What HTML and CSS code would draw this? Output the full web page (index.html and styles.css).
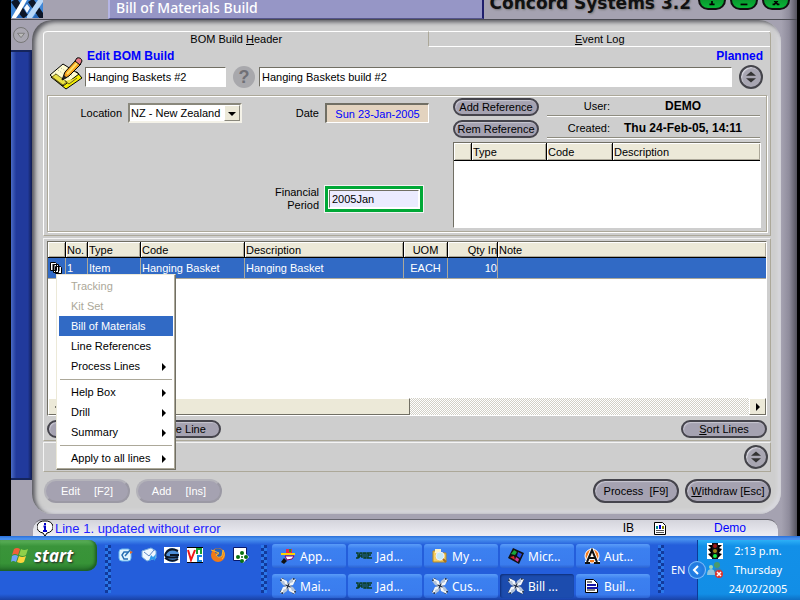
FILE: index.html
```html
<!DOCTYPE html>
<html lang="en">
<head>
    <meta charset="UTF-8">
    <meta name="viewport" content="width=device-width, initial-scale=1.0">
    <title>Bill of Materials Build</title>
    <link rel="stylesheet" href="styles.css">
</head>
<body>
    <!-- shared icons -->
    <svg class="sprite" aria-hidden="true">
        <symbol id="star" viewBox="0 0 16 16">
            <path d="M1 1l14 14M15 1L1 15" stroke="#2c3a52" stroke-width="4"/>
            <path d="M1 0l6 3 1 4-5-1zM16 1l-3 6-4 1 1-5zM15 16l-6-3-1-4 5 1zM0 15l3-6 4-1-1 5z" fill="#f2f7fc"/>
            <path d="M0 3l3 4 3 1-2-5zM13 0L9 3 8 6l5-2zM16 13l-3-4-3-1 2 5zM3 16l4-3 1-3-5 2z" fill="#b4c4da"/>
        </symbol>
        <symbol id="jade" viewBox="0 0 16 16">
            <path d="M0 10h2V5H0M3 10l1-5h2v5M4 8h2M8 5v5h2V5H7M12 5v5M11 5h5M12 7h3M11 10h5" fill="none" stroke="#0a3d22" stroke-width="1.4"/>
        </symbol>
        <symbol id="updown" viewBox="0 0 24 24">
            <path d="M6 10.500l6-5 6 5zM6 13.500l6 5 6-5z" fill="#333"/>
        </symbol>
    </svg>

    <div class="window">
        <header class="titlebar">
            <svg class="logo" viewBox="0 0 32 18">
                <path d="M0 0h32v18H0z" fill="#3f86d6"/>
                <path d="M0 2l3-2h4l10 15-4 3h-2zM17 2l3-2h3l9 13v5h-4z" fill="#0c1628"/>
                <path d="M1 17L11 0h5L6 18H1z" fill="#fff"/>
                <path d="M16 16L27 0h5v2L21 18h-5z" fill="#b9d8f8"/>
                <path d="M5 18l3-4 4 4zM22 18l3-4 3 4zM12 8l4-6 4 6-4 6z" fill="#2868b8"/>
                <path d="M13 8l3-4 3 4-3 5z" fill="#f4f9ff"/>
            </svg>
            <h1 class="title">Bill of Materials Build</h1>
            <div class="brand">Concord Systems 3.2</div>
            <div class="window-buttons">
                <button type="button" aria-label="Info"><svg viewBox="0 0 28 12"><path d="M11 4h6M14 0v4" stroke="#000" stroke-width="2"/></svg></button>
                <button type="button" aria-label="Minimize"><svg viewBox="0 0 28 12"><path d="M10 4h8" stroke="#000" stroke-width="2"/></svg></button>
                <button type="button" aria-label="Close"><svg viewBox="0 0 28 12"><path d="M12 0l4 4M16 0l-4 4M10 4h3M15 4h3" stroke="#000" stroke-width="2"/></svg></button>
            </div>
        </header>

        <div class="frame">
            <div class="rail">
                <button type="button" class="rail-button" aria-label="Toggle menu"><svg viewBox="0 0 16 16"><path d="M4 6h8l-4 5z" fill="#bbb" stroke="#777"/></svg></button>
                <div class="rail-bar"></div>
            </div>

            <main class="center">
                <div class="panel">
                    <section class="header-pane">
                        <nav class="tabs">
                            <button type="button" class="tab active">BOM Build <u>H</u>eader</button>
                            <button type="button" class="tab"><u>E</u>vent Log</button>
                        </nav>
                        <div class="header-form">
                            <svg class="note-icon" viewBox="0 0 34 34">
                                <path d="M2 20l15 12 16-11-5-6z" fill="#f4ee00" stroke="#000"/>
                                <path d="M1 18L14 7l16 10-16 12z" fill="#fffccf" stroke="#000"/>
                                <path d="M3 20l4-3 11 8-4 3zM16 24l4 3 8-6" fill="#e9e044" stroke="#6c6414"/>
                                <path d="M9 13l12 9M12 11l12 8M6 16l11 9" stroke="#9a9" stroke-dasharray="1 2"/>
                                <path d="M13 23l3-8 11-12 5 4-12 12z" fill="#f6a21c" stroke="#000"/>
                                <path d="M18 17l11-12" stroke="#ffe06a" stroke-width="2"/>
                                <path d="M26 4l2-3q4-1 5 3l-2 4z" fill="#e87c86" stroke="#000"/>
                                <path d="M13 23l2-5 3 3z" fill="#222"/>
                            </svg>
                            <div class="header-fields">
                                <div class="header-labels">
                                    <label for="code">Edit BOM Build</label>
                                    <span>Planned</span>
                                </div>
                                <div class="header-inputs">
                                    <input type="text" id="code" class="field code-field" value="Hanging Baskets #2">
                                    <button type="button" class="help">?</button>
                                    <input type="text" class="field name-field" value="Hanging Baskets build #2" aria-label="Build name">
                                    <button type="button" class="round" aria-label="Previous or next"><svg><use href="#updown"/></svg></button>
                                </div>
                            </div>
                        </div>

                        <div class="group">
                            <form class="details">
                                <label for="location">Location</label>
                                <div class="select-box">
                                    <select id="location"><option>NZ - New Zealand</option></select>
                                    <span class="select-arrow"></span>
                                </div>
                                <label for="date">Date</label>
                                <input type="text" id="date" class="field date-field" value="Sun 23-Jan-2005">
                                <label for="period" class="period-label">Financial<br>Period</label>
                                <div class="period-box"><input type="text" id="period" class="field" value="2005Jan"></div>
                            </form>
                            <div class="references">
                                <div class="reference-top">
                                    <div class="reference-buttons">
                                        <button type="button" class="pill">Add Reference</button>
                                        <button type="button" class="pill">Rem Reference</button>
                                    </div>
                                    <dl class="audit">
                                        <div><dt>User:</dt><dd>DEMO</dd></div>
                                        <div><dt>Created:</dt><dd>Thu 24-Feb-05, 14:11</dd></div>
                                    </dl>
                                </div>
                                <div class="list reference-list">
                                    <table>
                                        <colgroup><col class="w-17"><col class="w-75"><col class="w-66"><col></colgroup>
                                        <thead><tr><th></th><th>Type</th><th>Code</th><th>Description</th></tr></thead>
                                    </table>
                                </div>
                            </div>
                        </div>
                    </section>

                    <section class="lines-pane">
                        <div class="list lines-list">
                            <table>
                                <colgroup><col class="w-17"><col class="w-22"><col class="w-53"><col class="w-104"><col class="w-159"><col class="w-44"><col class="w-50"><col></colgroup>
                                <thead>
                                    <tr><th></th><th>No.</th><th>Type</th><th>Code</th><th>Description</th><th class="mid">UOM</th><th class="num">Qty In</th><th>Note</th></tr>
                                </thead>
                                <tbody>
                                    <tr class="selected">
                                        <td><svg class="row-icon" viewBox="0 0 14 14"><path d="M6.500 5.500h5l1 1v6h-6zM4.500 3.500h5v8h-5zM1.500 1.500h5l1 1v7h-6z" fill="#fff" stroke="#000"/><path d="M3 4h3M3 6h3M3 8h3M9 7h2M9 9h2" stroke="#000"/></svg></td>
                                        <td>1</td><td>Item</td><td>Hanging Basket</td><td>Hanging Basket</td><td class="mid">EACH</td><td class="num">10</td><td></td>
                                    </tr>
                                </tbody>
                            </table>
                            <div class="scrollbar">
                                <button type="button" class="scroll-button left" aria-label="Scroll left"></button>
                                <div class="thumb"></div>
                                <button type="button" class="scroll-button right" aria-label="Scroll right"></button>
                            </div>
                        </div>
                        <div class="line-buttons">
                            <button type="button" class="pill" aria-label="Insert"></button>
                            <button type="button" class="pill">Delete Line</button>
                            <button type="button" class="pill push"><u>S</u>ort Lines</button>
                        </div>

                        <ul class="menu">
                            <li><button type="button" disabled>Tracking</button></li>
                            <li><button type="button" disabled>Kit Set</button></li>
                            <li><button type="button" class="current">Bill of Materials</button></li>
                            <li><button type="button">Line References</button></li>
                            <li><button type="button" class="sub">Process Lines</button></li>
                            <li class="separator"></li>
                            <li><button type="button" class="sub">Help Box</button></li>
                            <li><button type="button" class="sub">Drill</button></li>
                            <li><button type="button" class="sub">Summary</button></li>
                            <li class="separator"></li>
                            <li><button type="button" class="sub">Apply to all lines</button></li>
                        </ul>
                    </section>

                    <section class="footer-pane">
                        <button type="button" class="round" aria-label="Previous or next line"><svg><use href="#updown"/></svg></button>
                    </section>

                    <div class="actions">
                        <button type="button" class="pill big" disabled><span>Edit</span><span>[F2]</span></button>
                        <button type="button" class="pill big" disabled><span>Add</span><span>[Ins]</span></button>
                        <button type="button" class="pill big push">Process&nbsp; [F9]</button>
                        <button type="button" class="pill big"><span><u>W</u>ithdraw [Esc]</span></button>
                    </div>
                </div>

                <div class="status">
                    <svg class="info" viewBox="0 0 16 17"><path d="M8 1a7 6 0 0 1 2 12l-2 3-2-3a7 6 0 0 1 2-12z" fill="#fff" stroke="#000"/><path d="M8 3v2M6.500 6.500H8V11M6 11h4" stroke="#0000c8" stroke-width="2" fill="none"/></svg>
                    <span class="status-text">Line 1. updated without error</span>
                    <span class="status-code">IB</span>
                    <svg class="report" viewBox="0 0 12 13"><path d="M.5.5h8l3 3v9H.5z" fill="#fff" stroke="#000"/><path d="M3 7V4" stroke="#088" stroke-width="2"/><path d="M6 7V3" stroke="#00c" stroke-width="2"/><path d="M9 7V4" stroke="#880" stroke-width="2"/><path d="M2 8.500h8M2 10.500h8" stroke="#555"/></svg>
                    <span class="status-user">Demo</span>
                </div>
            </main>
        </div>
    </div>

    <footer class="taskbar">
        <button type="button" class="start">
            <svg viewBox="0 0 18 17"><path d="M3 2q3-2 6 0L7 8Q4 6 1 8z" fill="#f0603a"/><path d="M10 2q3 2 7 0l-2 6q-3 2-7 0z" fill="#8fd04a"/><path d="M1 9q3-2 6 0l-2 6q-3-2-5 0z" fill="#6ea4f8"/><path d="M8 9q3 2 7 0l-2 6q-3 2-7 0z" fill="#fbd43c"/></svg>
            start
        </button>
        <div class="grip"></div>
        <div class="quick">
            <svg viewBox="0 0 16 16"><rect x="1" y="2" width="12" height="12" rx="3" fill="#e4f5ff" stroke="#6bb9ef"/><path d="M10 5H6L4 8l2 4h4M7 9l6-7" fill="none" stroke="#2a6fb4" stroke-width="1.500"/><path d="M12 4l3 1-3 2z" fill="#e86820"/></svg>
            <svg viewBox="0 0 16 16"><path d="M1 4l9-3 5 3v7l-9 3-5-4z" fill="#eef7ff" stroke="#7aaede"/><path d="M3 5l5 4 5-6" fill="none" stroke="#5a86c4"/><path d="M8 14l2-6 2 2 3-3-1 7-2-2z" fill="#2c9aee"/></svg>
            <svg viewBox="0 0 16 16"><path d="M0 0h16v16H0z" fill="#fff"/><circle cx="8" cy="8" r="7" fill="#4d8fd8"/><path d="M14 4Q6 0 2 6t12 4M1 11q7 5 13 1M6 8h9" fill="none" stroke="#0b1524" stroke-width="2"/></svg>
            <svg viewBox="0 0 16 16"><path d="M0 0h16v16H0z" fill="#fff"/><path d="M0 .5h16M0 15.500h16" stroke="#000"/><path d="M1 3l3 10L8 3" fill="none" stroke="#f01818" stroke-width="2"/><path d="M10 7V2h4v5" fill="none" stroke="#18a030" stroke-width="2"/><path d="M15 9h-4v5h4" fill="none" stroke="#1888e0" stroke-width="2"/></svg>
            <svg viewBox="0 0 16 16"><circle cx="8" cy="8" r="7" fill="#f07a18"/><path d="M5 2q5-2 8 2l-1 5q-3 3-6 0l3-2-4-1z" fill="#2c62b4"/><path d="M1 3l3 1 5 2-3 2q2 4 6 1l1-6q3 5-1 9" fill="none" stroke="#fbb92c"/></svg>
            <svg viewBox="0 0 16 16"><path d="M.5.5h13v13H.5z" fill="#fff" stroke="#06186c"/><path d="M9 3l7 7-6 6-6-6z" fill="#fff"/><g fill="#067010"><circle cx="9" cy="6" r="2"/><circle cx="5" cy="10" r="2"/><circle cx="13" cy="10" r="2"/><circle cx="9" cy="10" r="1"/><circle cx="9" cy="14" r="2"/></g></svg>
        </div>
        <div class="grip"></div>
        <div class="tasks">
            <button type="button"><svg viewBox="0 0 16 16"><path d="M1 6h14" stroke="#ffd200" stroke-width="2"/><path d="M6 1h6v4H6z" fill="#e8284c"/><path d="M9 1h2v3H9z" fill="#1b9a30"/><path d="M5 8h9l-2 3-5 1z" fill="#fff" stroke="#806"/><path d="M1 14l3-4 3 3-3 3z" fill="#111"/></svg>App...</button>
            <button type="button"><svg><use href="#jade"/></svg>Jad...</button>
            <button type="button"><svg viewBox="0 0 16 16"><path d="M1 3h5l1 2h7v9H1z" fill="#f6cf62" stroke="#b78a23"/><path d="M3 1h6v4H3z" fill="#fff4c4"/><circle cx="8" cy="8" r="4" fill="#c4eaf8" stroke="#eef"/><path d="M11 11l3 3" stroke="#a56d20" stroke-width="2"/></svg>My ...</button>
            <button type="button"><svg viewBox="0 0 16 16"><path d="M5 0l11 5-5 11L0 10z" fill="#111"/><path d="M6 2l3 2-2 3-4-1z" fill="#18a838"/><path d="M10 4l4 2-2 4-3-2z" fill="#1f48e0"/><path d="M2 9l4-1 1 4z" fill="#d8262c"/><path d="M8 9l3 2-1 3-3-2z" fill="#c8389a"/></svg>Micr...</button>
            <button type="button"><svg viewBox="0 0 16 16"><circle cx="8" cy="8" r="7" fill="#f47a1c" stroke="#fff"/><path d="M1 15h5M10 15h6M3 14L8 2l5 12M5 10h6" fill="none" stroke="#fff" stroke-width="4"/><path d="M1 15h5M10 15h6M3 14L8 2l5 12M5 10h6" fill="none" stroke="#111" stroke-width="2"/></svg>Aut...</button>
            <button type="button"><svg><use href="#star"/></svg>Mai...</button>
            <button type="button"><svg><use href="#jade"/></svg>Jad...</button>
            <button type="button"><svg><use href="#star"/></svg>Cus...</button>
            <button type="button" class="pressed"><svg><use href="#star"/></svg>Bill ...</button>
            <button type="button"><svg viewBox="0 0 16 16"><path d="M1.500 1.500h8l4 4v9h-12z" fill="#fff" stroke="#000"/><path d="M3 4h5M3 12h8" stroke="#000"/><path d="M3 7h9M3 10h11" stroke="#1515a8" stroke-width="2"/></svg>Buil...</button>
        </div>
        <div class="grip"></div>
        <div class="language">EN</div>
        <div class="tray">
            <button type="button" class="chevron" aria-label="Show hidden icons"><svg viewBox="0 0 18 18"><path d="M10 5L6 9l4 4" fill="none" stroke="#fff" stroke-width="2"/></svg></button>
            <div class="tray-icons">
                <svg viewBox="0 0 16 16"><path d="M0 0h16v16H0z" fill="#fff"/><path d="M1 2h14l-3 3 3 1-3 4 3 1-4 4H5l-4-4 3-1-3-4 3-1z" fill="#000"/><path d="M5 0h6v16H5z" fill="#111"/><circle cx="8" cy="3" r="2" fill="#a01818"/><circle cx="8" cy="8" r="2" fill="#a08818"/><circle cx="8" cy="13" r="2" fill="#18f048"/></svg>
                <svg viewBox="0 0 16 16"><circle cx="10" cy="3" r="3" fill="#4a9a6c"/><path d="M6 13q0-7 5-7t4 7z" fill="#3d7fb0"/><circle cx="4" cy="5" r="2" fill="#9fd6b4"/><path d="M0 13q0-6 4-6t4 6z" fill="#8fc4dc"/><circle cx="12" cy="12" r="4" fill="#e0342c"/><path d="M10 10l4 4M14 10l-4 4" stroke="#fff" stroke-width="1.500"/></svg>
            </div>
            <div class="clock"><span>2:13 p.m.</span><span>Thursday</span><span>24/02/2005</span></div>
        </div>
    </footer>
</body>
</html>
```
FILE: styles.css
```css
* {
    box-sizing: border-box;
}

body {
    margin: 0;
    height: 100vh;
    display: flex;
    flex-direction: column;
    overflow: hidden;
    background: #000;
    color: #000;
    font-family: "Liberation Sans", Arial, sans-serif;
    font-size: 11px;
    line-height: 13px;
}

button, input, select {
    font: inherit;
    color: inherit;
    margin: 0;
}

button {
    border: none;
    padding: 0;
    background: none;
    white-space: nowrap;
}

svg {
    display: block;
    flex-shrink: 0;
}

.sprite {
    display: none;
}

/* window */
.window {
    flex: 1;
    min-height: 0;
    display: flex;
    flex-direction: column;
    margin: 0 3px 0 11px;
    background: linear-gradient(to right, #a5a2b1 98%, #8f8c9c 99%, #55535e);
}

.titlebar {
    height: 20px;
    display: flex;
    align-items: flex-end;
    overflow: hidden;
    padding-right: 7px;
    border-bottom: 1px solid #4a4a52;
}

.logo {
    width: 32px;
    height: 18px;
    margin-bottom: 1px;
}

.title {
    flex: 1;
    margin: 0 0 0 65px;
    padding: 0 6px 2px;
    border-left: 2px solid #b5b5e4;
    border-right: 2px solid #1f1f6c;
    border-bottom: 1px solid #55558c;
    background: #9696c6;
    color: #fff;
    font: 500 14px/16px "Noto Sans", "Open Sans", sans-serif;
}

.brand {
    padding: 0 7px 5px 6px;
    font: bold 17px/22px "DejaVu Sans", Verdana, sans-serif;
    color: #111;
    text-shadow: 1px 1px 2px #777;
}

.window-buttons {
    display: flex;
    gap: 4px;
    padding-bottom: 9px;
}

.window-buttons button {
    width: 28px;
    height: 20px;
    padding-top: 9px;
    border: 2px solid #111;
    border-radius: 12px;
    background: linear-gradient(#0a7a25, #08b838);
}

.frame {
    flex: 1;
    min-height: 0;
    display: flex;
    padding-right: 16px;
}

.rail {
    width: 21px;
    display: flex;
    flex-direction: column;
    padding-bottom: 56px;
}

.rail-button {
    width: 16px;
    height: 16px;
    margin: 7px 2px;
    border: 1px solid #777;
    border-radius: 8px;
    background: #aaa8b2;
}

.rail-bar {
    flex: 1;
    border-top: 2px solid #15255c;
    border-bottom: 2px solid #15255c;
    background: linear-gradient(to right, #4a6bc4, #213a9c 25%, #213a9c 80%, #101c50);
}

.center {
    flex: 1;
    min-width: 0;
    display: flex;
    flex-direction: column;
}

.panel {
    flex: 1;
    display: flex;
    flex-direction: column;
    padding: 11px 10px 0 11px;
    border-radius: 20px 22px 22px 20px;
    background: #cecece;
    box-shadow: inset 3px 2px 4px #55555c, inset -3px -3px 4px #dadae0;
}

/* header pane */
.header-pane {
    display: flex;
    flex-direction: column;
    border-left: 1px solid #fff;
    border-right: 1px solid #aca899;
    border-bottom: 1px solid #aca899;
    border-radius: 4px 4px 0 0;
    padding: 0 3px 3px;
}

.tabs {
    display: grid;
    grid-template-columns: 385fr 342fr;
    margin: 0 -3px;
}

.tab {
    height: 16px;
    border-top: 1px solid #fff;
    border-bottom: 1px solid #fff;
    border-left: 1px solid #aca899;
    padding-top: 1px;
}

.tab.active {
    border-bottom-color: transparent;
    border-left: none;
    border-radius: 4px 0 0 0;
}

.header-form {
    display: flex;
    gap: 2px;
    height: 48px;
    padding: 1px 4px 0 2px;
}

.note-icon {
    width: 34px;
    height: 34px;
    margin-top: 9px;
}

.header-fields {
    flex: 1;
    min-width: 0;
}

.header-labels {
    display: flex;
    justify-content: space-between;
    padding: 1px 0 1px 2px;
    color: #00f;
    font-size: 12px;
    font-weight: bold;
    line-height: 15px;
}

.header-inputs {
    display: flex;
    align-items: center;
}

.field {
    height: 20px;
    min-width: 0;
    padding: 0 2px;
    border: 1px solid;
    border-color: #716f64 #fff #fff #716f64;
    border-radius: 0;
    background: #fff;
    outline: none;
}

.code-field {
    width: 141px;
}

.name-field {
    flex: 1;
    margin-right: 7px;
}

.help {
    width: 22px;
    height: 22px;
    margin: 0 4px 0 7px;
    border-radius: 11px;
    background: #a8a8ac;
    color: #707076;
    font-size: 18px;
    font-weight: bold;
    line-height: 22px;
}

.round {
    width: 24px;
    height: 24px;
    border: 2px solid #44444a;
    border-radius: 12px;
    background: #a8a6b2;
    box-shadow: inset 1px 1px 1px #dcdce4;
}

.round svg {
    width: 20px;
    height: 20px;
}

.group {
    display: flex;
    justify-content: space-between;
    min-height: 137px;
    padding: 2px 5px 3px;
    border: 1px solid #aca899;
    box-shadow: inset 1px 1px #fff, 1px 1px #fff;
}

.details {
    display: grid;
    grid-template-columns: 71px 114px 75px 104px;
    grid-template-rows: 20px 26px;
    column-gap: 4px;
    row-gap: 63px;
    align-items: center;
    padding-top: 5px;
    text-align: right;
}

.details label {
    padding-right: 2px;
}

.select-box {
    position: relative;
    height: 20px;
    border: 2px solid;
    border-color: #8a887c #f4f2e8 #f4f2e8 #8a887c;
    background: #fff;
}

.select-box select {
    appearance: none;
    display: block;
    width: 100%;
    height: 16px;
    padding: 0 1px;
    border: none;
    border-radius: 0;
    background: #fff;
}

.select-arrow {
    position: absolute;
    top: 0;
    right: 0;
    width: 16px;
    height: 16px;
    border: 1px solid;
    border-color: #fff #8a887c #8a887c #fff;
    background: #ece9d8;
    pointer-events: none;
}

.select-arrow::after {
    content: "";
    display: block;
    margin: 6px auto 0;
    width: 0;
    border: 4px solid transparent;
    border-top-color: #000;
    border-bottom: none;
}

.date-field {
    width: 104px;
    border-width: 2px 1px 1px 2px;
    background: #e3d3bf;
    color: #00f;
    text-align: center;
}

.period-label {
    grid-column: 1 / 4;
}

.period-box {
    width: 98px;
    padding: 1px;
    border: 3px solid #00a836;
    outline: 1px solid #f4f4f4;
    background: #fff;
}

.period-box .field {
    display: block;
    width: 100%;
    height: 18px;
    background: #ebebff;
}

.references {
    width: 308px;
    display: flex;
    flex-direction: column;
}

.reference-top {
    display: flex;
    gap: 8px;
}

.reference-buttons {
    display: flex;
    flex-direction: column;
    gap: 4px;
    padding-bottom: 3px;
}

.pill {
    min-width: 86px;
    height: 18px;
    border: 2px solid #45444c;
    border-radius: 9px;
    background: #a5a2b1;
    box-shadow: inset 1px 1px 1px #c9c7d2;
    line-height: 14px;
}

.audit {
    flex: 1;
    margin: 0;
}

.audit div {
    display: grid;
    grid-template-columns: 63px 1fr;
    align-items: center;
    height: 18px;
    margin: 0 1px 4px 0;
    padding-right: 4px;
    border-bottom: 1px solid #8e8c80;
    box-shadow: 0 1px #fff;
}

.audit dt {
    text-align: right;
}

.audit dd {
    margin: 0;
    text-align: center;
    font-size: 12px;
    font-weight: bold;
}

/* lists */
.list {
    display: flex;
    flex-direction: column;
    border: 1px solid;
    border-color: #716f64 #fff #fff #716f64;
    background: #fff;
}

.reference-list {
    flex: 1;
}

.list table {
    width: 100%;
    table-layout: fixed;
    border-collapse: separate;
    border-spacing: 0;
}

.list th {
    height: 16px;
    padding: 0 1px;
    border-left: 1px solid #000;
    border-bottom: 1px solid #000;
    background: #ece9d8;
    box-shadow: inset 1px 1px #fff, inset -1px -1px #aca899;
    font-weight: normal;
    text-align: left;
    line-height: 14px;
    white-space: nowrap;
}

.reference-list th {
    height: 18px;
}

.list th:first-child,
.list td:first-child {
    border-left: none;
}

.list td {
    height: 21px;
    padding: 0 1px;
    border-left: 1px solid #aca899;
    border-bottom: 1px solid #aca899;
    white-space: nowrap;
}

.list .mid {
    text-align: center;
}

.list .num {
    text-align: right;
    padding-right: 0;
}

.selected {
    background: #316ac5;
    color: #fff;
}

.row-icon {
    width: 14px;
    height: 14px;
}

.w-17 { width: 17px; }
.w-22 { width: 22px; }
.w-44 { width: 44px; }
.w-50 { width: 50px; }
.w-53 { width: 53px; }
.w-66 { width: 66px; }
.w-75 { width: 75px; }
.w-104 { width: 104px; }
.w-159 { width: 159px; }

.lines-pane {
    flex: 1;
    position: relative;
    display: flex;
    flex-direction: column;
    margin-top: 2px;
    padding: 2px 3px;
    border: 1px solid;
    border-color: #f4f4f4 #aca899 #aca899 #f4f4f4;
}

.lines-list {
    flex: 1;
}

.scrollbar {
    display: flex;
    height: 17px;
    margin-top: auto;
    background: repeating-conic-gradient(#d2d0c6 0 25%, #fff 0 50%) 0 0 / 2px 2px;
}

.scroll-button,
.thumb {
    width: 17px;
    border: 1px solid;
    border-color: #fff #716f64 #716f64 #fff;
    background: #ece9d8;
}

.thumb {
    width: 48%;
    margin-right: auto;
}

.scroll-button::after {
    content: "";
    display: block;
    width: 0;
    margin: 0 auto;
    border: 4px solid transparent;
}

.scroll-button.left::after {
    border-right-color: #000;
    border-left: none;
}

.scroll-button.right::after {
    border-left-color: #000;
    border-right: none;
}

.line-buttons {
    display: flex;
    gap: 2px;
    padding-top: 4px;
}

.push {
    margin-left: auto;
}

/* context menu */
.menu {
    position: absolute;
    left: 12px;
    top: 35px;
    z-index: 2;
    width: 120px;
    margin: 0;
    padding: 1px;
    list-style: none;
    border: 1px solid;
    border-color: #ece9d8 #716f64 #716f64 #ece9d8;
    box-shadow: inset -1px -1px #aca899;
    background: #fff;
}

.menu button {
    position: relative;
    display: block;
    width: 114px;
    height: 20px;
    margin-left: 1px;
    padding-left: 12px;
    text-align: left;
}

.menu button:disabled {
    color: #aca899;
}

.menu .current {
    background: #316ac5;
    color: #fff;
}

.menu .sub::after {
    content: "";
    position: absolute;
    right: 7px;
    top: 7px;
    border: 4px solid transparent;
    border-left-color: #000;
    border-right: none;
}

.separator {
    height: 1px;
    margin: 3px 2px 2px;
    background: #aca899;
}

/* bottom of panel */
.footer-pane {
    display: flex;
    justify-content: flex-end;
    margin-top: 1px;
    padding: 2px;
    border: 1px solid;
    border-color: #f4f4f4 #aca899 #aca899 #f4f4f4;
}

.actions {
    display: flex;
    gap: 6px;
    padding: 7px 0 11px 1px;
}

.big {
    height: 24px;
    border-radius: 12px;
}

.big:disabled {
    display: flex;
    justify-content: center;
    align-items: center;
    gap: 14px;
    border-color: #b4b3ba #9b99a4 #9b99a4 #b4b3ba;
    box-shadow: none;
    color: #fff;
}

.status {
    display: flex;
    align-items: center;
    height: 17px;
    margin: 5px 3px 0 1px;
    padding-left: 4px;
    border-top: 1px solid #66656e;
    border-radius: 10px 10px 0 0;
    background: linear-gradient(#d4d4dc, #eeeef4);
    font-size: 12px;
}

.info {
    width: 16px;
    height: 17px;
    margin-right: 2px;
}

.status-text {
    flex: 1;
    color: #22f;
    font-size: 13px;
}

.report {
    width: 12px;
    height: 13px;
    margin: 0 48px 0 20px;
}

.status-user {
    width: 64px;
    color: #00f;
}

/* taskbar */
.taskbar {
    display: flex;
    height: 64px;
    background: linear-gradient(#2a6fd8, #4a93f0 3px, #245edb 9px, #245edb 58px, #1941a5);
    color: #fff;
    font: 12px/19px "Noto Sans", "Open Sans", sans-serif;
}

.start {
    display: flex;
    align-items: center;
    gap: 5px;
    width: 97px;
    height: 31px;
    margin-top: 4px;
    padding-left: 11px;
    border-radius: 0 8px 10px 0;
    background: linear-gradient(#5fb35c, #3a943a 20%, #379337 75%, #24702a);
    box-shadow: inset -2px -1px 3px #1d5c22;
    font: italic bold 17px/24px "Open Sans", "Noto Sans", sans-serif;
    text-shadow: 1px 1px 2px #222;
}

.start svg {
    width: 18px;
    height: 17px;
}

.grip {
    width: 6px;
    margin: 9px 5px 7px 8px;
    background: repeating-conic-gradient(#123a9c 0 25%, #2b78ea 0 50%) 0 0 / 6px 6px;
}

.quick {
    display: flex;
    gap: 7px;
    width: 137px;
    padding: 11px 0 0 2px;
}

.quick svg,
.tasks svg,
.tray-icons svg {
    width: 16px;
    height: 16px;
}

.tasks {
    flex: 1;
    display: grid;
    grid-template-columns: repeat(5, 1fr);
    grid-template-rows: 24px 24px;
    gap: 6px 2px;
    padding-top: 8px;
}

.tasks button {
    display: flex;
    align-items: center;
    gap: 4px;
    min-width: 0;
    padding-left: 8px;
    border-radius: 3px;
    background: linear-gradient(#5a9cf8, #3c80f0 20%, #3a7cee 85%, #2c62d0);
}

.tasks .pressed {
    background: #1c4cae;
    box-shadow: inset 1px 1px 2px #0e2e78;
}

.language {
    width: 28px;
    padding: 24px 0 0 2px;
    font-size: 11px;
}

.tray {
    position: relative;
    display: flex;
    width: 103px;
    margin-top: 4px;
    padding: 1px 7px 0 9px;
    border-left: 1px solid #0b3c98;
    background: linear-gradient(#2db0f6, #1290e8 10%, #128ee6 90%, #0d6fc4);
}

.chevron {
    position: absolute;
    left: -10px;
    top: 21px;
    width: 18px;
    height: 18px;
    border-radius: 9px;
    background: radial-gradient(#2b8cf0, #1668d0);
    box-shadow: inset 0 0 1px 1px #8cc8ff;
}

.tray-icons {
    display: flex;
    flex-direction: column;
    gap: 3px;
    padding-top: 2px;
}

.clock {
    flex: 1;
    display: flex;
    flex-direction: column;
    align-items: center;
    font-size: 11px;
}
```
